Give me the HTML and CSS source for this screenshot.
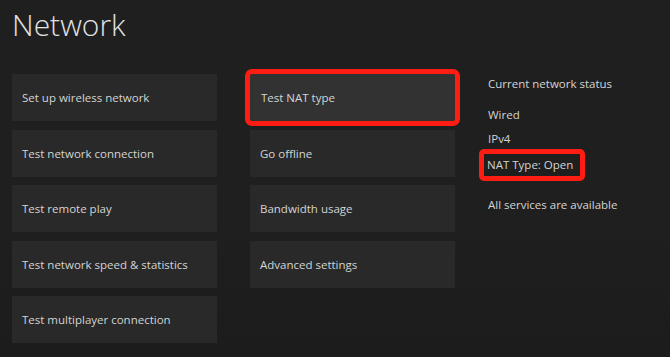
FILE: index.html
```html
<!DOCTYPE html>
<html>
<head>
  <title>Network</title>
  <meta charset="utf-8">
  <link rel="stylesheet" href="styles.css">
</head>
<body>
  <div class="header">
    <h1>Network</h1>
  </div>

  <div class="content">
    <div class="column">
      <div class="tile">Set up wireless network</div>
      <div class="tile">Test network connection</div>
      <div class="tile">Test remote play</div>
      <div class="tile">Test network speed &amp; statistics</div>
      <div class="tile">Test multiplayer connection</div>
    </div>

    <div class="column">
      <div class="tile tile-focused">Test NAT type</div>
      <div class="tile">Go offline</div>
      <div class="tile">Bandwidth usage</div>
      <div class="tile">Advanced settings</div>
    </div>

    <div class="status">
      <span class="status-title">Current network status</span>
      <span class="status-line status-wired">Wired</span>
      <span class="status-line status-ip">IPv4</span>
      <span class="status-line status-nat"><span class="marked">NAT Type: Open</span></span>
      <span class="status-line status-services">All services are available</span>
    </div>
  </div>
</body>
</html>
```

FILE: styles.css
```css
html {
  height: 100%;
}

body {
  font-family: "Open Sans", "Noto Sans", sans-serif;
  margin: 0;
  padding: 0 12px;
  min-height: 100%;
  box-sizing: border-box;
  background: linear-gradient(#1f1f1f, #1f1f1f 60%, #1c1c1c);
  color: #d4d4d4;
  overflow: hidden;
}

.header {
  height: 74px;
}

h1 {
  font-size: 30px;
  font-weight: 300;
  margin: 0;
  padding-top: 5px;
  line-height: 40px;
  color: #e2e2e2;
}

.content {
  display: flex;
  align-items: flex-start;
  gap: 33px;
}

.column {
  width: 205px;
  display: flex;
  flex-direction: column;
  gap: 8.5px;
}

.tile {
  height: 47px;
  background-color: #292929;
  font-size: 11.5px;
  padding-left: 10px;
  display: flex;
  align-items: center;
}

.tile-focused {
  background-color: #323232;
  padding-left: 11px;
  box-shadow: 0 0 0 1px #1b1b1b;
  outline: 5px solid #ff1c12;
  outline-offset: 0;
  border-radius: 2px;
}

.status {
  display: flex;
  flex-direction: column;
  font-size: 11.5px;
  line-height: 16px;
  padding-top: 2px;
}

.status-line {
  margin-top: 8px;
}

.status-wired {
  margin-top: 15px;
}

.status-ip {
  margin-top: 8px;
}

.status-nat {
  margin-top: 10px;
}

.marked {
  display: inline-block;
  border: 5px solid #ff1c12;
  border-radius: 5px;
  padding: 3px 7px 3px 3px;
  margin: -9px 0 -9px -9px;
  line-height: 16px;
}

.status-services {
  margin-top: 24px;
}
```
